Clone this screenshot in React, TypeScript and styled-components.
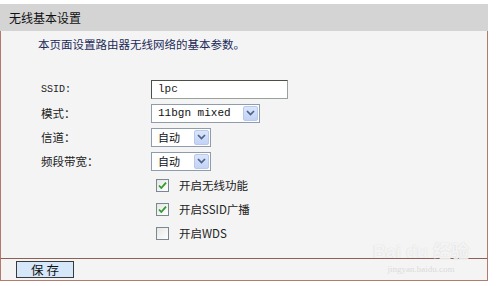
import React, { FC } from "react";
import styled, { createGlobalStyle } from "styled-components";

const GlobalStyle = createGlobalStyle`
  html, body {
    margin: 0;
    padding: 0;
    background: #ffffff;
  }
  body {
    font-family: "Noto Sans CJK SC", "DejaVu Sans", sans-serif;
  }
`;

const cjk = `"Noto Sans CJK SC", "Noto Sans CJK JP", sans-serif`;
const mono = `"Liberation Mono", "DejaVu Sans Mono", "Noto Sans CJK SC", monospace`;

const Check: FC = () => (
  <svg width="11" height="11" viewBox="0 0 11 11">
    <path d="M2 5.5 L4.3 8 L9 2.6" stroke="#2f9a2f" strokeWidth="1.8" fill="none" />
  </svg>
);

const Chevron: FC = () => (
  <svg width="9" height="6" viewBox="0 0 9 6">
    <path d="M1 1 L4.5 4.5 L8 1" stroke="#4d6185" strokeWidth="1.7" fill="none" />
  </svg>
);

interface SelectProps {
  value: string;
  width: number;
}

const Select: FC<SelectProps> = ({ value, width }) => (
  <SelectBox $width={width}>
    <SelectValue>{value}</SelectValue>
    <SelectButton>
      <Chevron />
    </SelectButton>
  </SelectBox>
);

const CheckRow: FC<{ checked?: boolean; label: string }> = ({ checked, label }) => (
  <CheckLine>
    <CheckBox>{checked && <Check />}</CheckBox>
    <CheckLabel>{label}</CheckLabel>
  </CheckLine>
);

const App: FC = () => (
  <Page>
    <GlobalStyle />
    <Panel>
      <Header>无线基本设置</Header>
      <Body>
        <Intro>本页面设置路由器无线网络的基本参数。</Intro>
        <Form>
          <Label $mono>SSID:</Label>
          <TextInput>lpc</TextInput>
          <Label>模式：</Label>
          <Select value="11bgn mixed" width={109} />
          <Label>信道：</Label>
          <Select value="自动" width={60} />
          <Label>频段带宽：</Label>
          <Select value="自动" width={60} />
          <span />
          <CheckRow checked label="开启无线功能" />
          <span />
          <CheckRow checked label="开启SSID广播" />
          <span />
          <CheckRow label="开启WDS" />
        </Form>
        <Watermark>
          <WatermarkBig>Bai du 经验</WatermarkBig>
          <WatermarkSmall>jingyan.baidu.com</WatermarkSmall>
        </Watermark>
      </Body>
      <Footer>
        <SaveButton>保 存</SaveButton>
      </Footer>
    </Panel>
  </Page>
);

const Page = styled.div`
  padding-top: 4px;
  width: 500px;
  height: 282px;
`;

const Panel = styled.div`
  width: 488px;
  display: flex;
  flex-direction: column;
`;

const Header = styled.div`
  height: 27px;
  background: #d4d4d4;
  display: flex;
  align-items: center;
  padding-left: 9px;
  font-family: ${cjk};
  font-size: 12px;
  color: #111;
`;

const Body = styled.div`
  position: relative;
  height: 227px;
  box-sizing: border-box;
  background: #f4f4f4;
  border-left: 1px solid #b47a6e;
  border-right: 1px solid #b47a6e;
  padding: 5px 0 0 37px;
`;

const Intro = styled.div`
  font-family: ${cjk};
  font-size: 11.5px;
  line-height: 16px;
  color: #1c2a58;
`;

const Form = styled.div`
  margin-top: 25px;
  display: grid;
  grid-template-columns: 110px auto;
  grid-auto-rows: 24px;
  align-items: center;
  justify-items: start;
  margin-left: 3px;
`;

const Label = styled.span<{ $mono?: boolean }>`
  font-family: ${(p) => (p.$mono ? mono : cjk)};
  font-size: ${(p) => (p.$mono ? "10px" : "11.5px")};
  color: #222;
`;

const TextInput = styled.div`
  width: 137px;
  height: 19px;
  box-sizing: border-box;
  border: 1px solid #4a5048;
  border-right-color: #9aa09a;
  border-bottom-color: #9aa09a;
  background: #fff;
  padding-left: 6px;
  display: flex;
  align-items: center;
  font-family: ${mono};
  font-size: 11px;
  color: #222;
`;

const SelectBox = styled.div<{ $width: number }>`
  width: ${(p) => p.$width}px;
  height: 19px;
  box-sizing: border-box;
  border: 1px solid #8e9cab;
  background: #fff;
  display: flex;
  align-items: center;
  padding: 1px;
`;

const SelectValue = styled.span`
  flex: 1;
  padding-left: 5px;
  font-family: ${mono};
  font-size: 11px;
  color: #111;
  white-space: nowrap;
`;

const SelectButton = styled.span`
  width: 15px;
  height: 15px;
  box-sizing: border-box;
  border: 1px solid #b8c9ec;
  border-radius: 2px;
  background: linear-gradient(#dbe5fb, #c2d3f6);
  display: flex;
  align-items: center;
  justify-content: center;
`;

const CheckLine = styled.div`
  display: flex;
  align-items: center;
  margin-left: 5px;
`;

const CheckBox = styled.span`
  width: 13px;
  height: 13px;
  box-sizing: border-box;
  border: 1px solid #7b8794;
  background: linear-gradient(135deg, #e6e6e2, #ffffff);
  display: flex;
  align-items: center;
  justify-content: center;
`;

const CheckLabel = styled.span`
  margin-left: 10px;
  font-family: ${cjk};
  font-size: 11.5px;
  color: #222;
`;

const Watermark = styled.div`
  position: absolute;
  right: 18px;
  bottom: -16px;
  display: flex;
  flex-direction: column;
  align-items: center;
  gap: 2px;
  pointer-events: none;
`;

const WatermarkBig = styled.span`
  font-family: "Liberation Sans", ${cjk};
  font-size: 18px;
  line-height: 20px;
  font-weight: bold;
  color: rgba(255, 255, 255, 0.8);
  text-shadow: 0 0 1px rgba(140, 140, 140, 0.4);
`;

const WatermarkSmall = styled.span`
  font-family: "Liberation Serif", serif;
  font-size: 9px;
  line-height: 10px;
  color: rgba(200, 200, 200, 0.6);
`;

const Footer = styled.div`
  height: 23px;
  box-sizing: border-box;
  background: #f4f4f4;
  border: 1px solid #b47a6e;
  border-top-color: #8c5f57;
  padding: 2px 0 0 15px;
`;

const SaveButton = styled.div`
  width: 58px;
  height: 17px;
  box-sizing: border-box;
  border: 1px solid #3a3a3a;
  background: #d6e7fa;
  display: flex;
  align-items: center;
  justify-content: center;
  font-family: ${cjk};
  font-size: 12.5px;
  color: #111;
  white-space: pre;
`;

export default App;
